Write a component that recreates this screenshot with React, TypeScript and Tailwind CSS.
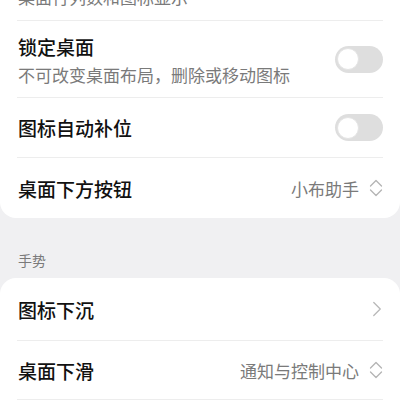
import { ChevronRight } from 'lucide-react'

const font = { fontFamily: '"Noto Sans CJK SC", "Noto Sans", sans-serif' }

const Toggle = () => (
  <div className="w-[48px] h-[27px] rounded-full bg-[#dedede] flex items-center px-[2px]">
    <div className="w-[22px] h-[22px] rounded-full bg-white border border-[#e4e4e4]" />
  </div>
)

const UpDown = () => (
  <svg width="14" height="18" viewBox="0 0 14 18" fill="none" stroke="#b4b4b4" strokeWidth="1.3" strokeLinecap="round" strokeLinejoin="round">
    <path d="M1.5 7 L7 1.5 L12.5 7" />
    <path d="M1.5 11 L7 16.5 L12.5 11" />
  </svg>
)

const Divider = () => <div className="mx-[17px] h-px bg-[#ededed]" />

const Row = ({ title, value, right, h = 'h-[60px]' }: { title: string; value?: string; right: React.ReactNode; h?: string }) => (
  <div className={`flex items-center justify-between pl-[18px] pr-[17px] ${h}`}>
    <span className="text-[19px] text-[#111] font-medium leading-none">{title}</span>
    <div className="flex items-center gap-[10px]">
      {value && <span className="text-[17px] text-[#7a7a7a] leading-none">{value}</span>}
      {right}
    </div>
  </div>
)

export default function App() {
  return (
    <div className="w-[400px] h-[400px] overflow-hidden bg-[#f0f0f2]" style={font}>
      <div className="bg-white rounded-b-[16px] -mt-[57px]">
        <div className="flex items-center justify-between pl-[18px] pr-[17px] h-[77px]">
          <div className="flex flex-col gap-[10px]">
            <span className="text-[19px] text-[#111] font-medium leading-none">桌面布局</span>
            <span className="text-[17px] text-[#7a7a7a] leading-none">桌面行列数和图标显示</span>
          </div>
        </div>
        <Divider />
        <div className="flex items-center justify-between pl-[18px] pr-[17px] h-[76px]">
          <div className="flex flex-col gap-[10px] pt-[1px]">
            <span className="text-[19px] text-[#111] font-medium leading-none">锁定桌面</span>
            <span className="text-[17px] text-[#7a7a7a] leading-none">不可改变桌面布局，删除或移动图标</span>
          </div>
          <Toggle />
        </div>
        <Divider />
        <Row title="图标自动补位" right={<Toggle />} h="h-[59px]" />
        <Divider />
        <Row title="桌面下方按钮" value="小布助手" right={<UpDown />} />
      </div>
      <div className="h-[60px] flex items-end pl-[18px] pb-[11px]">
        <span className="text-[14px] text-[#7a7a7a] leading-none">手势</span>
      </div>
      <div className="bg-white rounded-t-[16px] h-[200px]">
        <Row title="图标下沉" right={<ChevronRight size={26} color="#b8b8b8" strokeWidth={1.2} className="-mr-[7px]" />} h="h-[62px]" />
        <Divider />
        <Row title="桌面下滑" value="通知与控制中心" right={<UpDown />} h="h-[58px]" />
        <Divider />
      </div>
    </div>
  )
}
